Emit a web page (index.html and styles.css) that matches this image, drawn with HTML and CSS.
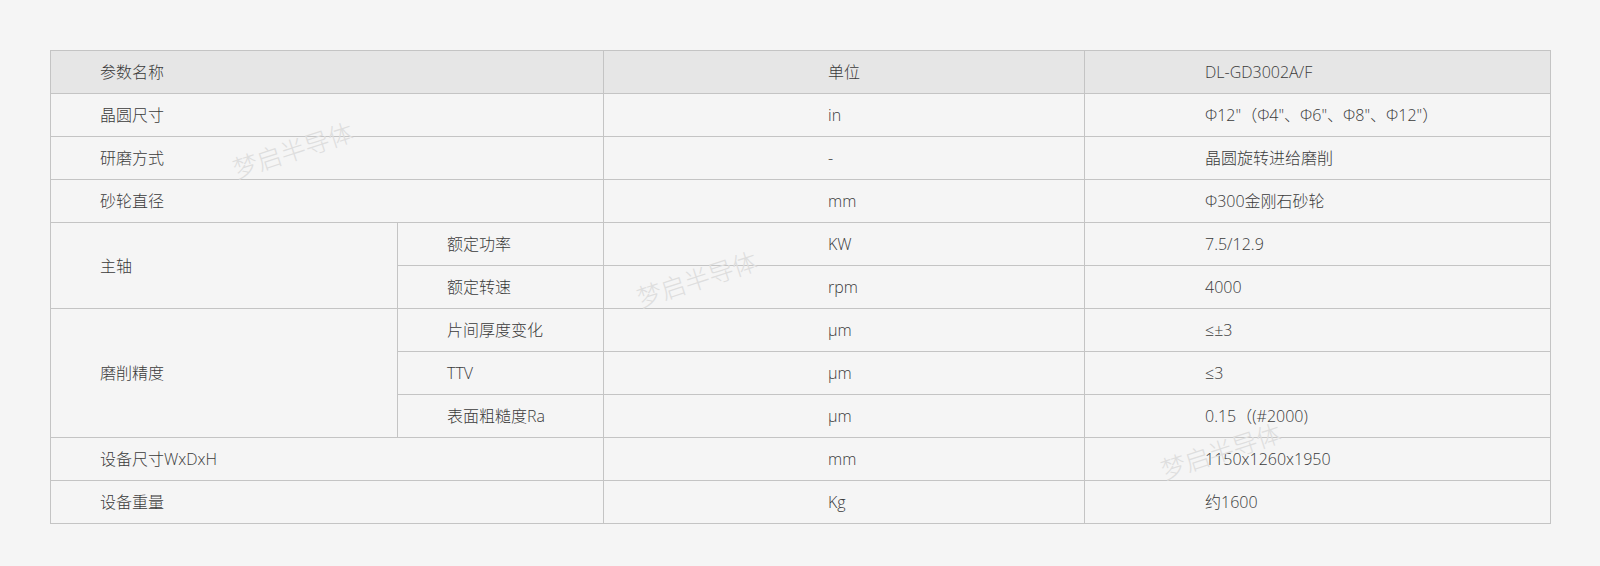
FILE: index.html
```html
<!DOCTYPE html>
<html lang="zh-CN">
<head>
<meta charset="utf-8">
<link rel="stylesheet" href="styles.css">
</head>
<body>
<div class="wrap">
  <table class="spec">
    <colgroup>
      <col class="c1"><col class="c2"><col class="c3"><col class="c4">
    </colgroup>
    <thead>
      <tr>
        <th colspan="2" class="p1">参数名称</th>
        <th class="p3">单位</th>
        <th class="p4">DL-GD3002A/F</th>
      </tr>
    </thead>
    <tbody>
      <tr><td colspan="2" class="p1">晶圆尺寸</td><td class="p3">in</td><td class="p4">Φ12"（Φ4"、Φ6"、Φ8"、Φ12"）</td></tr>
      <tr><td colspan="2" class="p1">研磨方式</td><td class="p3">-</td><td class="p4">晶圆旋转进给磨削</td></tr>
      <tr><td colspan="2" class="p1">砂轮直径</td><td class="p3">mm</td><td class="p4">Φ300金刚石砂轮</td></tr>
      <tr><td rowspan="2" class="p1">主轴</td><td class="p2">额定功率</td><td class="p3">KW</td><td class="p4">7.5/12.9</td></tr>
      <tr><td class="p2">额定转速</td><td class="p3">rpm</td><td class="p4">4000</td></tr>
      <tr><td rowspan="3" class="p1">磨削精度</td><td class="p2">片间厚度变化</td><td class="p3">μm</td><td class="p4">≤±3</td></tr>
      <tr><td class="p2">TTV</td><td class="p3">μm</td><td class="p4">≤3</td></tr>
      <tr><td class="p2">表面粗糙度Ra</td><td class="p3">μm</td><td class="p4">0.15（(#2000)</td></tr>
      <tr><td colspan="2" class="p1">设备尺寸WxDxH</td><td class="p3">mm</td><td class="p4">1150x1260x1950</td></tr>
      <tr><td colspan="2" class="p1">设备重量</td><td class="p3">Kg</td><td class="p4">约1600</td></tr>
    </tbody>
  </table>
  <span class="wm wm1">梦启半导体</span>
  <span class="wm wm2">梦启半导体</span>
  <span class="wm wm3">梦启半导体</span>
</div>
</body>
</html>
```
FILE: styles.css
```css
html, body {
  margin: 0;
  padding: 0;
  background: #f5f5f5;
}
body {
  font-family: "Open Sans", "Noto Sans CJK SC", sans-serif;
  font-weight: 300;
  color: #3a3a3a;
  font-size: 16px;
}
.wrap {
  position: relative;
  padding: 50px 50px 0 50px;
}
.spec {
  border-collapse: collapse;
  table-layout: fixed;
  width: 1500px;
}
.c1 { width: 347px; }
.c2 { width: 206px; }
.c3 { width: 481px; }
.c4 { width: 466px; }
.spec th, .spec td {
  border: 1px solid #c4c4c4;
  height: 42px;
  padding: 0;
  text-align: left;
  vertical-align: middle;
  font-weight: 300;
  line-height: 20px;
  white-space: nowrap;
}
.spec thead th {
  background: #e6e6e6;
}
.p1 { padding-left: 49px !important; }
.p2 { padding-left: 49px !important; }
.p3 { padding-left: 224px !important; }
.p4 { padding-left: 120px !important; }
.wm {
  position: absolute;
  font-family: "Noto Sans CJK SC", sans-serif;
  font-weight: 300;
  font-size: 25px;
  line-height: 34px;
  width: 125px;
  color: #dedede;
  transform: rotate(-18deg);
  pointer-events: none;
  white-space: nowrap;
}
.wm1 { left: 230px; top: 132px; }
.wm2 { left: 634px; top: 261px; }
.wm3 { left: 1158px; top: 433px; }
```
